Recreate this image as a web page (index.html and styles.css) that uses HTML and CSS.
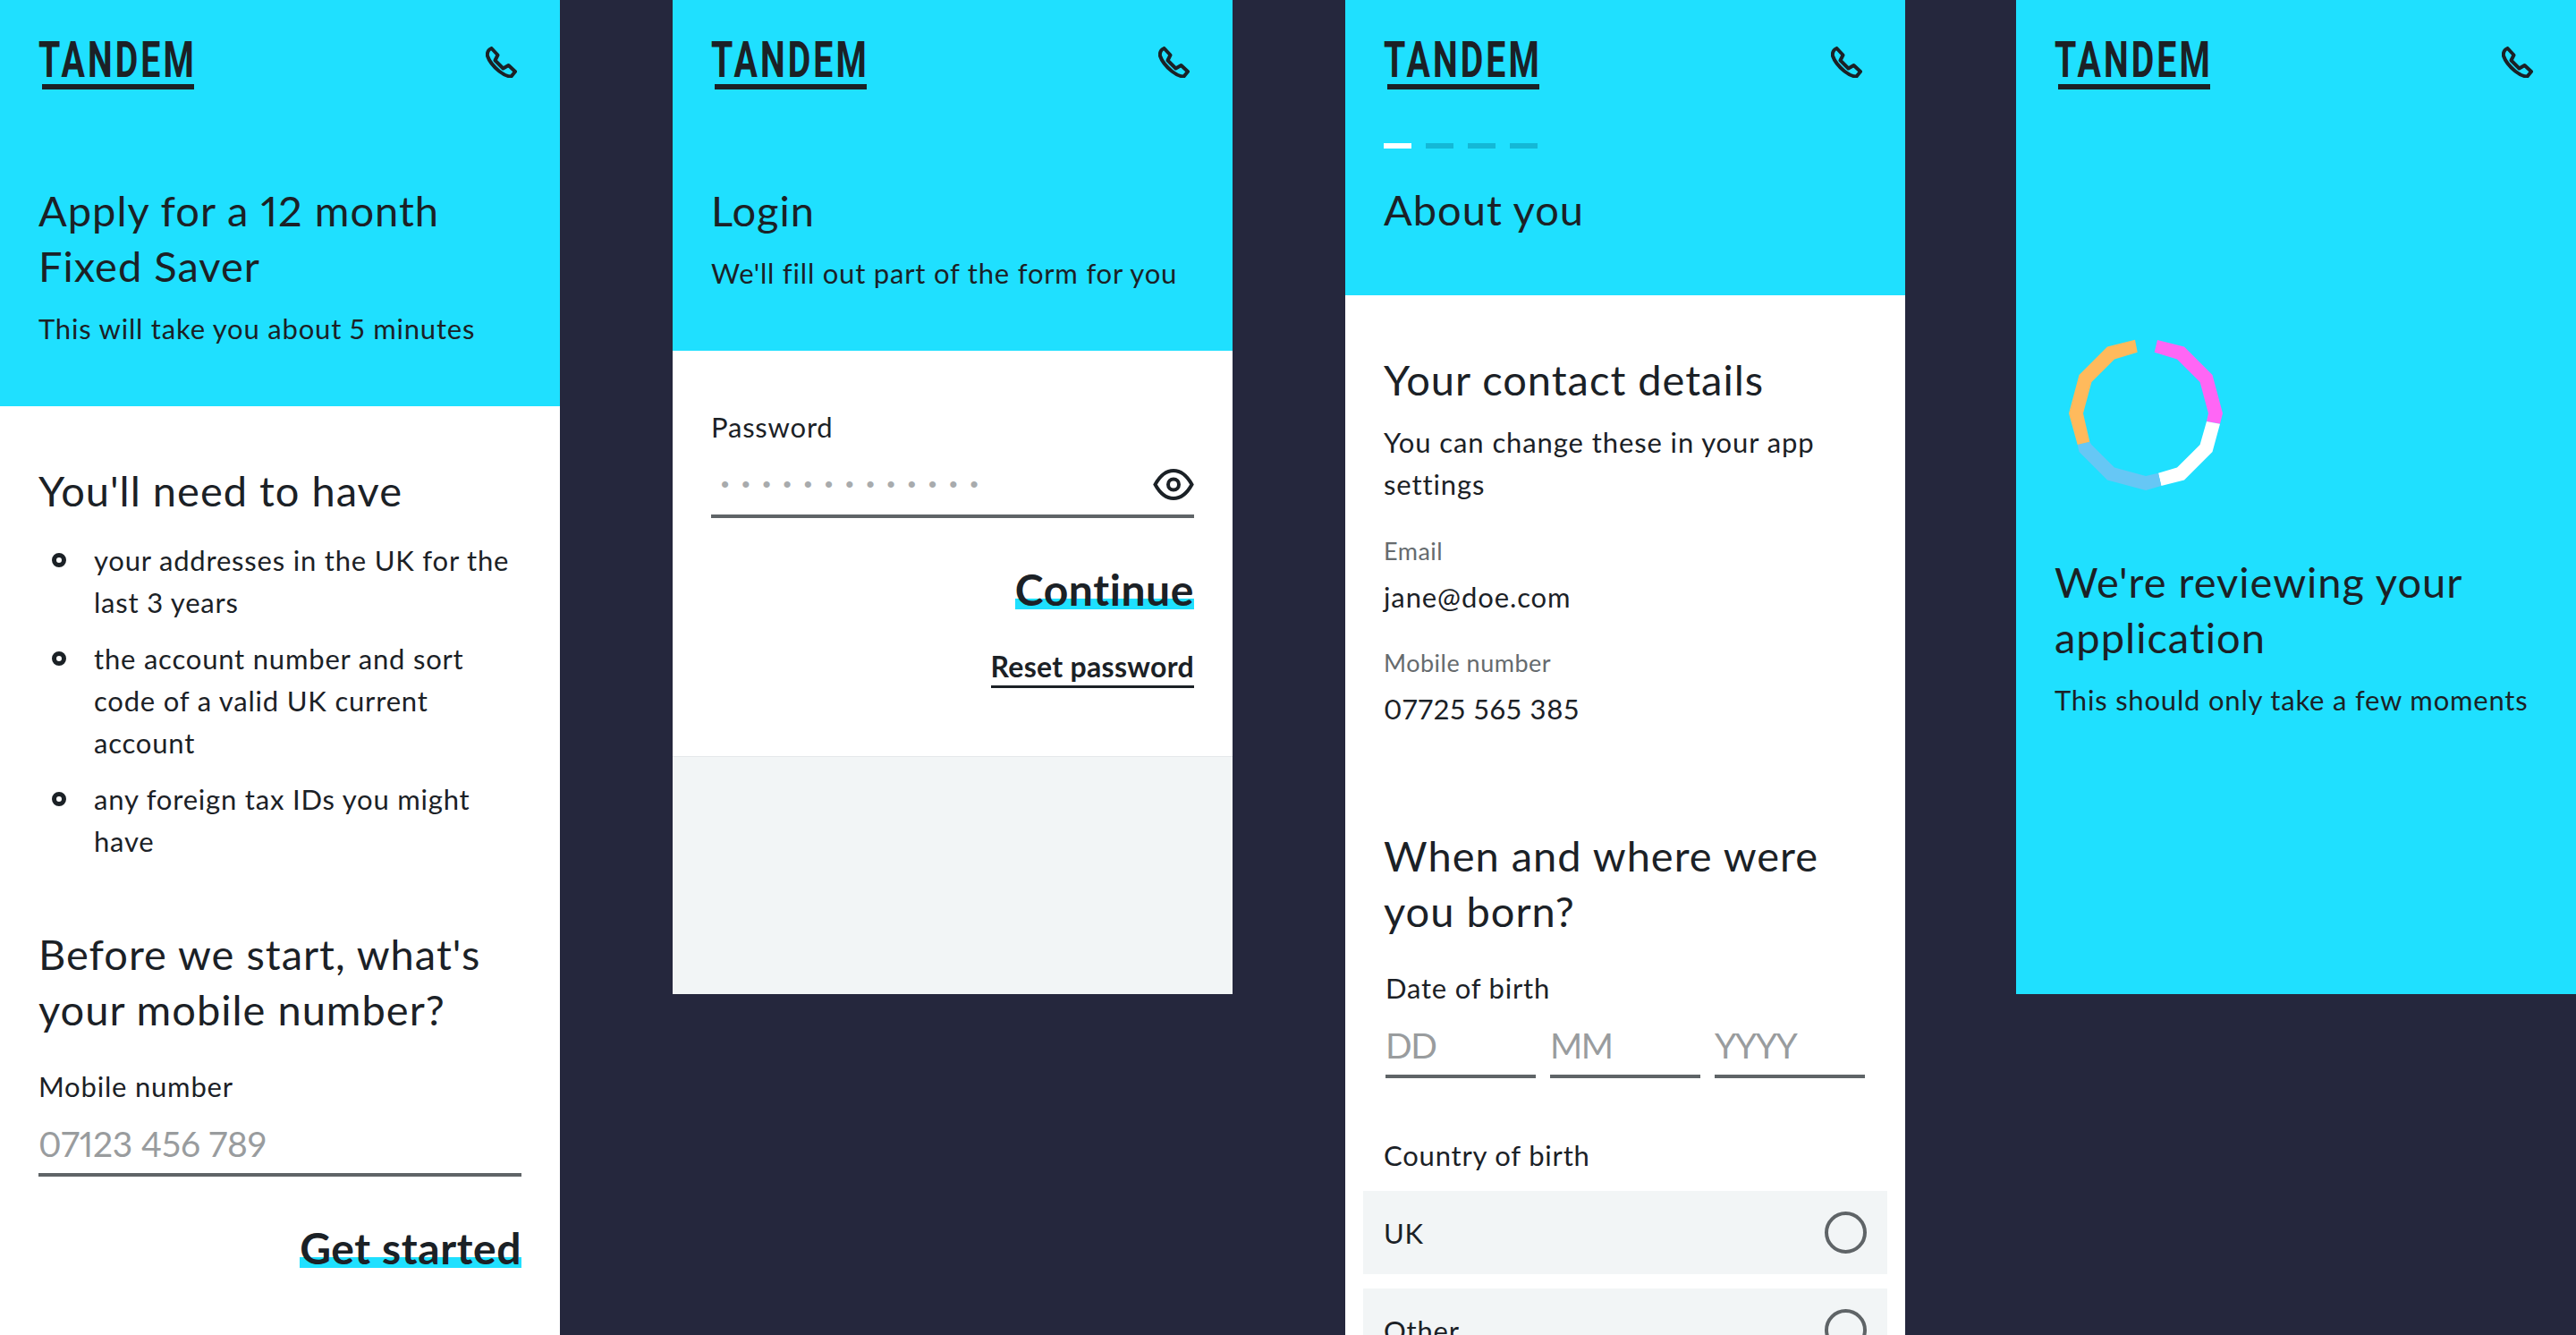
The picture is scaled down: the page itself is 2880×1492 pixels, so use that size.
FILE: index.html
```html
<!DOCTYPE html>
<html lang="en">
<head>
    <meta charset="UTF-8">
    <meta name="viewport" content="width=device-width, initial-scale=1.0">
    <title>Tandem - Fixed Saver application</title>
    <link rel="stylesheet" href="styles.css">
</head>
<body>

<main class="screens">

    <!-- Intro -->
    <section class="panel panel-full">
        <header class="panel-head">
            <div class="topbar">
                <div class="logo"><span>TANDEM</span></div>
                <svg class="phone" viewBox="0 0 35 35"><path d="M6.500 2 13.500 9.500 10.500 15.500 19.500 24.500 25.500 21 33 28 28.500 33.500C24 33.500 20 31.500 15 27.500 9 22.500 4 16.500 2 10.500 1.500 7 3 3.500 6.500 2Z"/></svg>
            </div>
            <h1 class="title title-first">Apply for a 12 month<br>Fixed Saver</h1>
            <p class="sub">This will take you about 5 minutes</p>
        </header>
        <div class="panel-body">
            <h2 class="title">You'll need to have</h2>
            <ul class="needs">
                <li>your addresses in the UK for the last 3 years</li>
                <li>the account number and sort code of a valid UK current account</li>
                <li>any foreign tax IDs you might have</li>
            </ul>
            <h2 class="title title-next">Before we start, what's your mobile number?</h2>
            <div class="label label-mobile">Mobile number</div>
            <div class="field field-mobile"><span class="placeholder">07123 456 789</span></div>
            <div class="actions actions-start"><a class="cta" href="#">Get started</a></div>
        </div>
    </section>

    <!-- Login -->
    <section class="panel panel-short">
        <header class="panel-head">
            <div class="topbar">
                <div class="logo"><span>TANDEM</span></div>
                <svg class="phone" viewBox="0 0 35 35"><path d="M6.500 2 13.500 9.500 10.500 15.500 19.500 24.500 25.500 21 33 28 28.500 33.500C24 33.500 20 31.500 15 27.500 9 22.500 4 16.500 2 10.500 1.500 7 3 3.500 6.500 2Z"/></svg>
            </div>
            <h1 class="title title-first">Login</h1>
            <p class="sub">We'll fill out part of the form for you</p>
        </header>
        <div class="panel-body login-body">
            <div class="label">Password</div>
            <div class="field field-password">
                <span class="dots">•••••••••••••</span>
                <svg class="eye" viewBox="0 0 46 35"><path d="M2.500 17.500C8 7.500 15 2 23 2S38 7.500 43.500 17.500C38 27.500 31 33 23 33S8 27.500 2.500 17.500Z"/><circle cx="23" cy="17.500" r="6"/></svg>
            </div>
            <div class="actions actions-continue"><a class="cta" href="#">Continue</a></div>
            <div class="actions actions-reset"><a class="reset" href="#">Reset password</a></div>
        </div>
        <div class="panel-foot"></div>
    </section>

    <!-- About you -->
    <section class="panel panel-full">
        <header class="panel-head panel-head-steps">
            <div class="topbar">
                <div class="logo"><span>TANDEM</span></div>
                <svg class="phone" viewBox="0 0 35 35"><path d="M6.500 2 13.500 9.500 10.500 15.500 19.500 24.500 25.500 21 33 28 28.500 33.500C24 33.500 20 31.500 15 27.500 9 22.500 4 16.500 2 10.500 1.500 7 3 3.500 6.500 2Z"/></svg>
            </div>
            <div class="steps">
                <span class="step step-on"></span>
                <span class="step"></span>
                <span class="step"></span>
                <span class="step"></span>
            </div>
            <h1 class="title">About you</h1>
        </header>
        <div class="panel-body">
            <h2 class="title">Your contact details</h2>
            <p class="copy copy-first">You can change these in your app settings</p>
            <div class="small-label small-email">Email</div>
            <div class="copy">jane@doe.com</div>
            <div class="small-label small-mobile">Mobile number</div>
            <div class="copy">07725 565 385</div>
            <h2 class="title title-born">When and where were you born?</h2>
            <div class="label label-dob">Date of birth</div>
            <div class="dob">
                <div class="field field-date"><span class="placeholder">DD</span></div>
                <div class="field field-date"><span class="placeholder">MM</span></div>
                <div class="field field-date"><span class="placeholder">YYYY</span></div>
            </div>
            <div class="label label-country">Country of birth</div>
            <div class="radio-row"><span>UK</span><i class="radio"></i></div>
            <div class="radio-row"><span>Other</span><i class="radio"></i></div>
        </div>
    </section>

    <!-- Reviewing -->
    <section class="panel panel-short panel-review">
        <header class="panel-head">
            <div class="topbar">
                <div class="logo"><span>TANDEM</span></div>
                <svg class="phone" viewBox="0 0 35 35"><path d="M6.500 2 13.500 9.500 10.500 15.500 19.500 24.500 25.500 21 33 28 28.500 33.500C24 33.500 20 31.500 15 27.500 9 22.500 4 16.500 2 10.500 1.500 7 3 3.500 6.500 2Z"/></svg>
            </div>
            <svg class="spinner" viewBox="0 0 180 180">
                <polygon fill="#ff66f5" points="103,8 133,15.5 164.5,47 176,90 173,101.7 158,99 160,90 150.6,55 125,29.4 99.7,21.7"/>
                <polygon fill="#ffffff" points="173,101.7 164.5,133 133,164.5 107.3,171 104,156.7 125,150.6 150.6,125 158,99"/>
                <polygon fill="#66c7f5" points="107.3,171 90,176 47,164.5 15.5,133 13.7,125 27.3,121.7 29.4,125 55,150.6 90,160 104,156.7"/>
                <polygon fill="#ffba5c" points="13.7,125 4,90 15.5,47 47,15.5 78,7.7 80.7,21.7 55,29.4 29.4,55 20,90 27.3,121.7"/>
            </svg>
            <h1 class="title title-review">We're reviewing your<br>application</h1>
            <p class="sub">This should only take a few moments</p>
        </header>
    </section>

</main>

</body>
</html>
```

FILE: styles.css
```css
* {
    box-sizing: border-box;
}

html, body {
    margin: 0;
    padding: 0;
    height: 100%;
    overflow: hidden;
}

body {
    font-family: 'Lato', 'Open Sans', sans-serif;
    font-variant-numeric: proportional-nums;
    font-variant-ligatures: none;
    background-color: #25273d;
    color: #1b2126;
}

.screens {
    display: flex;
    align-items: flex-start;
    gap: 126px;
    height: 1492px;
}

.panel {
    width: 626px;
    flex: none;
    background-color: #ffffff;
    display: flex;
    flex-direction: column;
}

.panel-full {
    height: 1492px;
    overflow: hidden;
}

.panel-short {
    height: 1111px;
}

.panel-review {
    margin-left: -2px;
    background-color: #1fe0ff;
}

.panel-head {
    background-color: #1fe0ff;
    padding: 0 43px 63px;
}

.panel-head-steps {
    padding-bottom: 65px;
}

.panel-body {
    padding: 63px 43px 0;
}

.topbar {
    height: 130px;
    display: flex;
    justify-content: space-between;
    align-items: flex-start;
}

.logo {
    width: 170px;
    height: 53px;
    margin-top: 47px;
    margin-left: 4px;
    border-bottom: 6px solid #1b2126;
}

.logo span {
    display: block;
    margin-left: -4px;
    font-family: 'Roboto', sans-serif;
    font-weight: 700;
    font-size: 56px;
    line-height: 40px;
    letter-spacing: 4.5px;
    transform: scaleX(0.7);
    transform-origin: left center;
    white-space: nowrap;
}

.phone {
    width: 35px;
    height: 35px;
    margin-top: 52px;
    margin-right: 5px;
    fill: none;
    stroke: #1b2126;
    stroke-width: 4;
    stroke-linejoin: round;
}

.title {
    font-size: 47px;
    line-height: 62px;
    font-weight: 400;
    letter-spacing: 1px;
    margin: 0;
}

.title-first {
    margin-top: 74px;
}

.title-next {
    margin-top: 71px;
}

.title-born {
    margin-top: 109px;
}

.title-review {
    margin-top: 67px;
}

.sub {
    font-size: 31px;
    line-height: 47px;
    letter-spacing: 0.8px;
    margin: 16px 0 0;
}

.needs {
    list-style: none;
    margin: 24px 0 0;
    padding: 0 0 0 62px;
}

.needs li {
    font-size: 31px;
    line-height: 47px;
    letter-spacing: 0.8px;
    margin-bottom: 16px;
    position: relative;
}

.needs li:last-child {
    margin-bottom: 0;
}

.needs li::before {
    content: "";
    position: absolute;
    left: -47px;
    top: 15px;
    box-sizing: border-box;
    width: 16px;
    height: 16px;
    border: 5px solid #1b2126;
    border-radius: 50%;
}

.label {
    font-size: 31px;
    line-height: 47px;
    letter-spacing: 0.8px;
}

.label-mobile {
    margin-top: 32px;
}

.label-dob {
    margin-top: 32px;
    margin-left: 2px;
}

.label-country {
    margin-top: 63px;
}

.field {
    border-bottom: 4px solid #5f6467;
    display: flex;
    align-items: center;
}

.placeholder {
    font-size: 39px;
    letter-spacing: -0.2px;
    color: #999c9e;
}

.field-mobile {
    height: 77px;
    padding-top: 6px;
}

.field-password {
    height: 78px;
    justify-content: space-between;
    padding-top: 6px;
}

.dots {
    font-family: 'Liberation Sans', sans-serif;
    font-size: 26px;
    letter-spacing: 14.1px;
    color: #a8abad;
    margin-left: 11px;
}

.eye {
    width: 46px;
    height: 35px;
    fill: none;
    stroke: #1b2126;
    stroke-width: 4;
}

.actions {
    display: flex;
    justify-content: flex-end;
}

.actions-start {
    margin-top: 52px;
}

.actions-continue {
    margin-top: 52px;
}

.actions-reset {
    margin-top: 43px;
}

.cta {
    color: #1b2126;
    text-decoration: none;
    font-size: 48px;
    line-height: 44px;
    padding-top: 6px;
    font-weight: 700;
    letter-spacing: 0.6px;
    background: linear-gradient(#1fe0ff, #1fe0ff) left bottom / 100% 12px no-repeat;
}

.reset {
    color: #1b2126;
    text-decoration: none;
    font-size: 32px;
    line-height: 42px;
    font-weight: 700;
    letter-spacing: 0.3px;
    border-bottom: 3px solid #1b2126;
}

.login-body {
    padding-top: 62px;
    height: 453px;
}

.panel-foot {
    flex: 1;
    background-color: #f2f5f6;
    border-top: 1px solid #e5e8ea;
}

.steps {
    display: flex;
    gap: 16px;
    margin-top: 30px;
    margin-bottom: 37px;
}

.step {
    width: 31px;
    height: 6px;
    background-color: #14b8d6;
}

.step-on {
    background-color: #ffffff;
}

.copy {
    font-size: 31px;
    line-height: 47px;
    letter-spacing: 0.9px;
    margin: 15px 0 0;
}

.copy-first {
    margin-top: 16px;
}

.small-label {
    font-size: 27px;
    line-height: 40px;
    letter-spacing: 0.5px;
    color: #666b6e;
}

.small-email {
    margin-top: 31px;
}

.small-mobile {
    margin-top: 30px;
}

.small-label + .copy {
    margin-top: 8px;
}

.dob {
    display: flex;
    gap: 16px;
    margin-left: 2px;
    margin-right: 2px;
}

.field-date {
    flex: 1;
    height: 77px;
    padding-top: 6px;
}

.field-date .placeholder {
    letter-spacing: -1.5px;
}

.radio-row {
    margin: 16px -23px 0;
    height: 93px;
    padding: 0 23px;
    background-color: #f2f5f6;
    display: flex;
    justify-content: space-between;
    align-items: center;
    font-size: 31px;
    letter-spacing: 0.8px;
}

.radio {
    width: 47px;
    height: 47px;
    border: 4px solid #5f6467;
    border-radius: 50%;
}

.spinner {
    display: block;
    width: 180px;
    height: 180px;
    margin: 242px 0 0 12px;
}
```
